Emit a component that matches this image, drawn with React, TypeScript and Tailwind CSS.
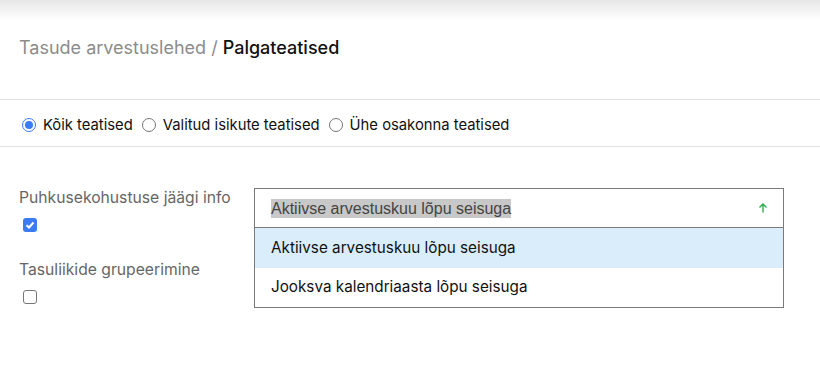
import { useState } from "react";

const font = { fontFamily: "Inter, 'Noto Sans', sans-serif" };

function Radio({ checked, label }: { checked?: boolean; label: string }) {
  return (
    <label className="flex items-center gap-[7px]">
      <span
        className={
          checked
            ? "flex h-[14px] w-[14px] items-center justify-center rounded-full border border-[#3b7cf5] bg-white"
            : "block h-[14px] w-[14px] rounded-full border border-[#767676] bg-white"
        }
      >
        {checked && <span className="h-[8px] w-[8px] rounded-full bg-[#3b7cf5]" />}
      </span>
      <span className="text-[14.8px] text-[#111]">{label}</span>
    </label>
  );
}

function Check({ checked }: { checked?: boolean }) {
  return checked ? (
    <span className="flex h-[14px] w-[14px] items-center justify-center rounded-[3px] bg-[#3b7cf5]">
      <svg width="10" height="10" viewBox="0 0 10 10" fill="none" stroke="white" strokeWidth="2">
        <path d="M1.5 5.2 4 7.5 8.5 2.5" />
      </svg>
    </span>
  ) : (
    <span className="block h-[14px] w-[14px] rounded-[3px] border border-[#767676] bg-white" />
  );
}

export default function App() {
  const [open] = useState(true);
  return (
    <div className="h-[378px] w-[820px] bg-white" style={font}>
      <div className="h-[20px] bg-gradient-to-b from-[#e6e6e6] to-white" />
      <div className="px-[19px] pt-[14px] pb-[38px] text-[18px] leading-[27px]">
        <span className="text-[#8c8c8c]">Tasude arvestuslehed / </span>
        <span className="font-medium text-[#111]">Palgateatised</span>
      </div>
      <div className="flex h-[48px] items-center gap-[9px] border-y border-[#e2e2e2] px-[22px] pt-[4px]">
        <Radio checked label="Kõik teatised" />
        <Radio label="Valitud isikute teatised" />
        <Radio label="Ühe osakonna teatised" />
      </div>
      <div className="flex items-start px-[19px] pt-[41px]">
        <div className="w-[235px] shrink-0">
          <div className="text-[15.7px] leading-[19px] text-[#666]">Puhkusekohustuse jäägi info</div>
          <div className="mt-[11px] pl-[4px]">
            <Check checked />
          </div>
          <div className="mt-[28px] text-[15.7px] leading-[19px] text-[#666]">Tasuliikide grupeerimine</div>
          <div className="mt-[11px] pl-[4px]">
            <Check />
          </div>
        </div>
        <div className="w-[530px] border border-[#7a7a7a] bg-white">
          <div className="flex h-[39px] items-center justify-between border-b border-[#7a7a7a] pl-[16px] pr-[14px]">
            <span
              className="bg-[#c8c8c8] text-[16px] leading-[19px] text-[#444]"
              style={{ fontFamily: "'Liberation Sans', Arial, sans-serif" }}
            >
              Aktiivse arvestuskuu lõpu seisuga
            </span>
            <svg width="12" height="12" viewBox="0 0 12 12" fill="none" stroke="#2eaa4a" strokeWidth="1.4">
              <path d="M6 10.5V2M2.5 5.5 6 2l3.5 3.5" />
            </svg>
          </div>
          {open && (
            <>
              <div className="flex h-[40px] items-center bg-[#d9edfb] px-[16px] text-[15.25px] text-[#111]">
                Aktiivse arvestuskuu lõpu seisuga
              </div>
              <div className="flex h-[39px] items-center px-[16px] text-[15.25px] text-[#111]">
                Jooksva kalendriaasta lõpu seisuga
              </div>
            </>
          )}
        </div>
      </div>
    </div>
  );
}
